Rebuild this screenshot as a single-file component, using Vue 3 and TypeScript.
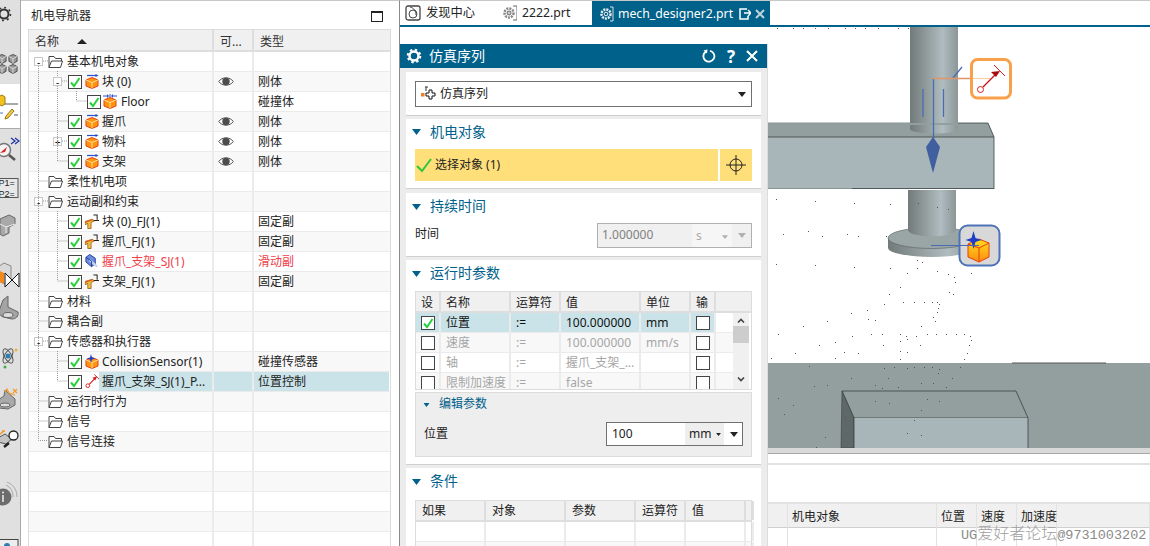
<script setup lang="ts">
interface TreeRow {
  depth?: number
  label?: string
  expander?: '+' | '-'
  icon?: string
  seen?: boolean
  type?: string
  red?: boolean
  selected?: boolean
}

const filled: TreeRow[] = [
  { depth: 0, label: '基本机电对象', expander: '-', icon: 'folder' },
  { depth: 1, label: '块 (0)', expander: '-', icon: 'body', seen: true, type: '刚体' },
  { depth: 2, label: 'Floor', icon: 'collide', type: '碰撞体' },
  { depth: 1, label: '握爪', icon: 'body', seen: true, type: '刚体' },
  { depth: 1, label: '物料', expander: '+', icon: 'body', seen: true, type: '刚体' },
  { depth: 1, label: '支架', icon: 'body', seen: true, type: '刚体' },
  { depth: 0, label: '柔性机电项', icon: 'folder' },
  { depth: 0, label: '运动副和约束', expander: '-', icon: 'folder' },
  { depth: 1, label: '块 (0)_FJ(1)', icon: 'fixed', type: '固定副' },
  { depth: 1, label: '握爪_FJ(1)', icon: 'fixed', type: '固定副' },
  { depth: 1, label: '握爪_支架_SJ(1)', icon: 'slider', type: '滑动副', red: true },
  { depth: 1, label: '支架_FJ(1)', icon: 'fixed', type: '固定副' },
  { depth: 0, label: '材料', icon: 'folder' },
  { depth: 0, label: '耦合副', icon: 'folder' },
  { depth: 0, label: '传感器和执行器', expander: '-', icon: 'folder' },
  { depth: 1, label: 'CollisionSensor(1)', icon: 'sensor', type: '碰撞传感器' },
  { depth: 1, label: '握爪_支架_SJ(1)_P...', icon: 'position', type: '位置控制', selected: true },
  { depth: 0, label: '运行时行为', icon: 'folder' },
  { depth: 0, label: '信号', icon: 'folder' },
  { depth: 0, label: '信号连接', icon: 'folder' },
]
const rows: TreeRow[] = [...filled, {}, {}, {}, {}, {}]

const params = [
  { name: '位置', op: ':=', val: '100.000000', unit: 'mm', on: true },
  { name: '速度', op: ':=', val: '100.000000', unit: 'mm/s', on: false },
  { name: '轴', op: ':=', val: '握爪_支架_...', unit: '', on: false },
  { name: '限制加速度', op: ':=', val: 'false', unit: '', on: false },
]

const upper: [number, number][] = [[34,537],[151,544],[268,550],[376,553],[55,643],[130,633],[172,649],[247,643],[280,649],[363,649],[34,733],[151,736],[268,742],[376,745],[427,760],[457,745],[517,754],[549,763],[568,772],[571,785],[406,802],[619,760],[457,720],[472,727],[517,562],[549,568],[460,550],[37,25],[85,25],[115,25],[150,25],[190,25],[240,25],[270,25],[300,25],[340,25],[400,25],[430,25]]
const lower: [number, number][] = [[570,5],[406,22],[373,43],[553,37],[565,43],[358,73],[415,67],[448,67],[478,67],[500,67],[515,67],[523,73],[520,85],[517,97],[259,100],[307,91],[310,118],[331,121],[505,112],[511,124],[187,124],[115,139],[469,139],[40,163],[262,169],[319,163],[352,163],[406,163],[424,169],[427,178],[406,184],[454,169],[487,163],[514,163],[544,163],[574,163],[598,163],[616,169],[619,181],[613,196],[211,187],[163,196],[355,196],[466,196],[238,217],[280,220],[91,220],[406,214],[427,217],[607,220],[18,235],[211,235],[406,238],[598,238],[133,259],[388,262],[427,265],[448,262],[478,262],[500,262],[523,268],[358,265],[586,262],[520,280],[259,295],[370,295],[148,319],[187,316],[331,316],[352,325],[400,322],[544,322],[562,295],[505,310],[469,310],[40,355],[85,376],[58,403],[331,364],[373,370],[487,358],[523,364],[469,391],[448,421],[427,460],[469,466],[181,472],[241,415],[154,502]]
const dots = [
  ...upper.map(([x, y]) => ({ x: Math.round(765 + x / 3), y: Math.round(20 + y / 3) })),
  ...lower.map(([x, y]) => ({ x: Math.round(765 + x / 3), y: Math.round(280 + y / 3) })),
]
</script>

<template>
  <svg class="defs" aria-hidden="true">
    <defs>
      <linearGradient id="cyl" x1="0" x2="1" y1="0" y2="0">
        <stop offset="0" stop-color="#727a7a" />
        <stop offset="0.3" stop-color="#8d9797" />
        <stop offset="0.68" stop-color="#afbcc0" />
        <stop offset="1" stop-color="#8b9696" />
      </linearGradient>
      <linearGradient id="cube" x1="0" x2="0" y1="0" y2="1">
        <stop offset="0" stop-color="#ffe21a" />
        <stop offset="1" stop-color="#ff8a10" />
      </linearGradient>
      <symbol id="i-folder" viewBox="0 0 15 13">
        <path d="M1 12.500V1.500h5l1.500 2h6v2.500" fill="#fff" stroke="#444" />
        <path d="M1 12.500h11.500l2-6.500h-11z" fill="#fff" stroke="#444" />
      </symbol>
      <symbol id="i-check" viewBox="0 0 14 14">
        <rect x=".5" y=".5" width="13" height="13" fill="#fff" stroke="#444" />
        <path d="M3 7.500l3 3.500 5.500-8" fill="none" stroke="#26d23c" stroke-width="2" />
      </symbol>
      <symbol id="i-cube" viewBox="0 0 14 12">
        <path d="M7 .5l6 2.500v6l-6 2.500-6-2.500V3z" fill="#ff9412" stroke="#e8400c" />
        <path d="M1 3l6 2.500L13 3M7 5.500V11.500" fill="none" stroke="#ffe08a" />
      </symbol>
      <symbol id="i-body" viewBox="0 0 14 15">
        <path d="M2 1.500h10" stroke="#2b50c8" stroke-width="1.200" />
        <path d="M13.500 1.500l-3-1.500v3z" fill="#2b50c8" />
        <use href="#i-cube" x="0" y="3" width="14" height="12" />
      </symbol>
      <symbol id="i-collide" viewBox="0 0 14 15">
        <path d="M0 2h5M9 2h5M7 0v4" stroke="#2b50c8" stroke-width="1" />
        <path d="M6 2l-2-2v4zM8 2l2-2v4z" fill="#2b50c8" />
        <use href="#i-cube" x="0" y="3" width="14" height="12" />
      </symbol>
      <symbol id="i-fixed" viewBox="0 0 15 15">
        <path d="M0 7.500l8-2.500 2 2-3.500 1.500v6.500H3V9.500L0 11z" fill="#f6c23e" stroke="#8a5012" stroke-width=".8" />
        <path d="M0 7.500l8-2.500 1 1-9 3z" fill="#e25a1a" />
        <path d="M9 .5h4v5M9.500 6.500H15" fill="none" stroke="#222" stroke-width="1.100" />
      </symbol>
      <symbol id="i-slider" viewBox="0 0 15 15">
        <path d="M1 3l4-3 6 4v6l-4 3-6-5z" fill="#6b8de0" stroke="#223a96" />
        <path d="M5 6l8 7" stroke="#c8d4ee" stroke-width="2.500" />
        <path d="M1 3l6 4v6" fill="none" stroke="#223a96" />
      </symbol>
      <symbol id="i-sensor" viewBox="0 0 14 15">
        <use href="#i-cube" x="0" y="3" width="14" height="12" />
        <path d="M6 0l1 3.500 3.500 1L7 5.500 6 9 5 5.500 1.500 4.500 5 3.500z" fill="#2340c4" />
      </symbol>
      <symbol id="i-position" viewBox="0 0 15 15">
        <circle cx="3" cy="12" r="2" fill="#fff" stroke="#d61c1c" />
        <path d="M4.500 10.500l6-6" stroke="#d61c1c" stroke-width="1.200" />
        <path d="M13 2l-5 1.500 3 3z" fill="#d61c1c" />
        <path d="M10 0l5 5" stroke="#d61c1c" />
      </symbol>
      <symbol id="i-eye" viewBox="0 0 16 11">
        <path d="M.7 5.500C4 .6 12 .6 15.300 5.500 12 10.400 4 10.400 .7 5.500z" fill="#fff" stroke="#555" />
        <circle cx="8" cy="5.500" r="3.700" fill="#4c4c4c" />
      </symbol>
      <symbol id="i-tri" viewBox="0 0 9 6">
        <path d="M0 0h9L4.500 6z" fill="#00618a" />
      </symbol>
      <symbol id="i-down" viewBox="0 0 8 5">
        <path d="M0 0h8L4 5z" />
      </symbol>
      <symbol id="i-cubelet" viewBox="0 0 11 11">
        <path d="M5.500 .5l4.500 2.200v5.300l-4.500 2.500L1 8V2.700z" fill="#9a9a9a" stroke="#444" />
        <path d="M1 2.700l4.500 2.400L10 2.700M5.500 5v5.500" fill="none" stroke="#ddd" />
      </symbol>
    </defs>
  </svg>

  <div class="app">
    <aside class="rail">
      <div class="rail-grey rail-a">
        <svg viewBox="0 0 20 84" width="20" height="84">
          <circle cx="4" cy="14" r="4.500" fill="none" stroke="#333" stroke-width="2" />
          <circle cx="4" cy="14" r="6.500" fill="none" stroke="#333" stroke-width="1.500" stroke-dasharray="2 3" />
          <use href="#i-cubelet" x="-3" y="54" width="10" height="10" />
          <use href="#i-cubelet" x="8" y="54" width="10" height="10" />
          <use href="#i-cubelet" x="-3" y="64" width="10" height="10" />
          <use href="#i-cubelet" x="8" y="64" width="10" height="10" />
        </svg>
      </div>
      <div class="rail-white">
        <svg viewBox="0 84 20 44" width="20" height="44">
          <path d="M-2 97l4-2 3 2v7l-3 2-4-2z" fill="#f1c21f" stroke="#9a7a10" />
          <path d="M5 104h13" stroke="#555" />
          <path d="M0 113h3" stroke="#5577cc" />
          <path d="M6 116l6-7 2 2-6 7-3 1z" fill="#f1c850" stroke="#9a7a10" />
          <path d="M14 115h4" stroke="#555" />
        </svg>
      </div>
      <div class="rail-grey rail-b">
        <svg viewBox="0 128 20 418" width="20" height="418">
          <path d="M11 138l4 3-4 3M15 138l4 3-4 3" fill="none" stroke="#1f35a8" stroke-width="1.300" />
          <circle cx="4" cy="150" r="6.500" fill="#f4f4f4" stroke="#777" stroke-width="1.500" />
          <path d="M0 153l7-6-2 5z" fill="#d32020" />
          <path d="M9 155l6 5" stroke="#555" stroke-width="2.500" />
          <rect x="-2" y="178.500" width="20" height="19" fill="#e8e8e8" stroke="#555" />
          <text x="-1.500" y="186" class="rail-text">P1=</text>
          <text x="-1.500" y="196.500" class="rail-text">P2=</text>
          <path d="M0 219l9-4 6 3v6l-6 3v6l-6 3-3-2z" fill="#a9a9a9" stroke="#666" />
          <path d="M0 224l6 3 9-3M6 227v6" fill="none" stroke="#eee" />
          <path d="M-2 267l6-4 7 3v14l-6 4-7-3z" fill="#d9d9d9" stroke="#888" />
          <path d="M-2 270l6 3v11l-6-3z" fill="#f58a1a" />
          <path d="M5 273l14 14V273L5 287z" fill="#fff" stroke="#111" />
          <path d="M3 300l5-4v11l10 5c1 4-2 7-6 7l-9-2c-3-1-4-4-4-6z" fill="#a4a4a4" stroke="#666" />
          <ellipse cx="8" cy="315" rx="5" ry="2.500" fill="#ddd" stroke="#666" />
          <ellipse cx="8" cy="356" rx="8" ry="3.500" fill="none" stroke="#555" transform="rotate(60 8 356)" />
          <ellipse cx="8" cy="356" rx="8" ry="3.500" fill="none" stroke="#555" transform="rotate(-60 8 356)" />
          <circle cx="8" cy="356" r="2.500" fill="#2a7fb0" />
          <circle cx="16" cy="350" r="1.500" fill="#f0b030" />
          <circle cx="5" cy="367" r="1.500" fill="#33b04a" />
          <path d="M-2 400l6-4 1-6 10 9v6l-7 4-9-1z" fill="#a9a9a9" stroke="#666" />
          <ellipse cx="5" cy="405" rx="5" ry="2" fill="#ddd" stroke="#666" />
          <path d="M5 392l2-3 2 4 6 2M13 389l4 4M17 389l-4 4" fill="none" stroke="#f59a2a" stroke-width="1.200" />
          <path d="M-2 438l7-4 7 5-6 5-8-2z" fill="#c4c4c4" stroke="#555" />
          <path d="M-1 435l5-4M2 431l3 0" stroke="#f59a2a" stroke-width="1.300" />
          <circle cx="13.500" cy="435.500" r="4.500" fill="#fff" stroke="#222" stroke-width="1.300" />
          <path d="M4 447l5-4" stroke="#222" stroke-width="2.500" />
          <circle cx="3" cy="497" r="8.500" fill="#6c6c6c" />
          <circle cx="3" cy="492.500" r="1" fill="#eee" />
          <path d="M3 495v7" stroke="#eee" stroke-width="1.500" />
          <path d="M6 485a12 12 0 0 1 7 12M7 482a15 15 0 0 1 10 15" fill="none" stroke="#aaa" />
          <rect x="-2" y="539.500" width="20" height="10" fill="#eee" stroke="#444" />
          <circle cx="7" cy="546" r="3" fill="#2a7fb0" />
        </svg>
      </div>
    </aside>

    <section class="nav">
      <header class="nav-head">
        <span>机电导航器</span>
        <i class="max-icon"></i>
      </header>
      <div class="tree">
        <div class="tree-head">
          <div class="th th-name">名称<i class="sort"></i></div>
          <div class="th">可...</div>
          <div class="th">类型</div>
        </div>
        <div
          v-for="(r, i) in rows"
          :key="i"
          class="tree-row"
          :class="{ odd: i % 2 === 1, sel: r.selected, red: r.red }"
        >
          <div class="cell name" :class="'d' + r.depth">
            <template v-if="r.label">
              <span v-if="r.depth !== 2" class="slot">
                <span v-if="r.expander" class="exp">{{ r.expander }}</span>
              </span>
              <svg v-if="r.depth !== 0" class="chk"><use href="#i-check" /></svg>
              <svg :class="r.depth === 0 ? 'folder' : 'ico'"><use :href="'#i-' + r.icon" /></svg>
              <span class="lbl">{{ r.label }}</span>
            </template>
          </div>
          <div class="cell mid">
            <svg v-if="r.seen" class="eye"><use href="#i-eye" /></svg>
          </div>
          <div class="cell kind">{{ r.type }}</div>
        </div>
        <svg class="guides" viewBox="29 52 200 400" width="200" height="400">
          <g fill="none" stroke="#999" stroke-dasharray="1 1">
            <path d="M38.500 67V441.500H48M57.500 72V77M57.500 87V162H68M76.500 92V102H87" />
            <path d="M43 62H48M38.500 182H48M43 202H48M38.500 302H48M38.500 322H48M43 342H48M38.500 402H48M38.500 422H48" />
            <path d="M62 82H68M57.500 122H68M62 142H68" />
            <path d="M57.500 212V282H68M57.500 222H68M57.500 242H68M57.500 262H68" />
            <path d="M57.500 352V382H68M57.500 362H68" />
          </g>
        </svg>
      </div>
    </section>

    <main class="main">
      <nav class="tabs">
        <div class="tab tab-1">
          <svg width="16" height="16" viewBox="0 0 16 16"><rect x="1" y="1" width="14" height="14" rx="2" fill="none" stroke="#444" stroke-width="1.300" /><circle cx="8" cy="9" r="4" fill="none" stroke="#444" /><path d="M5 2c4 1 6 4 6 8" fill="none" stroke="#444" /></svg>
          <span>发现中心</span>
        </div>
        <div class="tab tab-2">
          <svg width="14" height="16" viewBox="0 0 14 16"><path d="M10 1h4v14h-4" fill="none" stroke="#666" /><circle cx="6" cy="8" r="4.500" fill="none" stroke="#888" stroke-width="2.500" stroke-dasharray="2 1" /><circle cx="6" cy="8" r="2" fill="#ccc" stroke="#666" /></svg>
          <span>2222.prt</span>
        </div>
        <div class="tab tab-on">
          <svg width="14" height="16" viewBox="0 0 14 16"><path d="M10 1h3v14h-3" fill="none" stroke="#ddd" /><circle cx="6" cy="8" r="4.500" fill="none" stroke="#eee" stroke-width="2.500" stroke-dasharray="2 1" /><circle cx="6" cy="8" r="1.800" fill="#00618a" stroke="#eee" /></svg>
          <span class="tab-name">mech_designer2.prt</span>
          <svg width="12" height="12" viewBox="0 0 12 12"><path d="M8 1H1v10h8V8" fill="none" stroke="#fff" stroke-width="1.500" /><path d="M5 5h7M9 2l3 3-3 3" fill="none" stroke="#fff" stroke-width="1.300" /></svg>
          <svg width="10" height="10" viewBox="0 0 10 10"><path d="M1 1l8 8M9 1l-8 8" stroke="#bcd3de" stroke-width="2" /></svg>
        </div>
      </nav>

      <div class="view">
        <svg class="scene" viewBox="400 27 750 421" width="750" height="421">
          <rect x="910" y="27" width="48" height="102" fill="url(#cyl)" />
          <path d="M767 123H988L994 137V189H767z" fill="#a8b5b9" />
          <path d="M767 123H988L994 137H767z" fill="#939e9e" />
          <path d="M910 125v4a24 4.500 0 0 0 48 0v-4z" fill="url(#cyl)" />
          <path d="M767 137H994M994 137V189M852 188.500H994M958 123H988L994 137" fill="none" stroke="#3c4444" stroke-width=".8" />
          <path d="M767 188.500H852M767 123H910" stroke="#8d9494" stroke-width="1" />
          <path d="M888 238v10a44 9 0 0 0 88 0v-10z" fill="url(#cyl)" />
          <ellipse cx="932" cy="238" rx="44" ry="10.500" fill="#9aa5a5" stroke="#59605f" stroke-width=".6" />
          <path d="M908 190V230a24 6.500 0 0 0 48 0V190z" fill="url(#cyl)" />
          <path d="M767 363H1150V448H767z" fill="#939e9e" />
          <path d="M1012 363H1106" stroke="#555" />
          <path d="M842 391H1016L1028 418H854z" fill="#939e9e" stroke="#38413f" stroke-width=".8" />
          <path d="M842 391L854 418V448H841z" fill="#5f6868" stroke="#38413f" stroke-width=".6" />
          <path d="M854 418H1028V448H854z" fill="#a8b5b9" />
          <path d="M854 418V448M1028 418V448" stroke="#38413f" stroke-width=".8" />
          <rect v-for="(d, i) in dots" :key="i" :x="d.x" :y="d.y" width="1" height="1" fill="#555" />
          <g stroke="#4a6cb4" stroke-width="1.300" fill="none">
            <path d="M933.500 78.500V140M953 78l9-11M923 89V117M943.500 89V117" />
          </g>
          <path d="M933 137l7 10-7 26-7-26z" fill="#3f5f9f" />
          <path d="M933 78.500H973" stroke="#e0956a" stroke-width="1.300" />
          <path d="M973 78.500H990" stroke="#f9cfae" stroke-width="1.300" />
          <rect x="971.500" y="59.500" width="39" height="38.500" rx="6" fill="none" stroke="#f9a04a" stroke-width="3" />
          <circle cx="980.500" cy="89.500" r="3" fill="#fff" stroke="#d81c1c" />
          <path d="M983 87l12-12" stroke="#c41010" stroke-width="1.300" />
          <path d="M1000 71l-9 1 5 5z" fill="#a80d0d" />
          <path d="M994 65l11 11" stroke="#d81c1c" />
          <rect x="959.500" y="225.500" width="40" height="40" rx="8" fill="#d8d8d8" stroke="#4e72b8" stroke-width="2" />
          <path d="M968 244l11-5 10 4v14l-10 5-11-5z" fill="url(#cube)" stroke="#e63e10" />
          <path d="M968 244l11 4 10-5M979 248v14" fill="none" stroke="#e63e10" />
          <path d="M973.500 231l2 7 6 2-6 2-2 7-2-7-6-2 6-2z" fill="#1f3fc4" />
          <path d="M931 245.500H979" stroke="#4a6cb4" />
        </svg>
      </div>

      <div class="bottom">
        <div class="strip"></div>
        <div class="gap-a"></div>
        <div class="gap-b"></div>
        <div class="log log-head">
          <div></div><div>机电对象</div><div>位置</div><div>速度</div><div>加速度</div><div></div>
        </div>
        <div class="log log-row">
          <div></div><div></div><div></div><div></div><div></div><div></div>
        </div>
      </div>

      <div class="watermark"><span class="wm-a">UG</span>爱好者论坛<span class="wm-a">@9731003202</span></div>

      <div class="dialog">
        <header class="dlg-title">
          <svg width="16" height="16" viewBox="0 0 16 16"><circle cx="8" cy="8" r="4.500" fill="none" stroke="#fff" stroke-width="2.500" /><circle cx="8" cy="8" r="6.300" fill="none" stroke="#fff" stroke-width="2" stroke-dasharray="2.400 2.550" /></svg>
          <span class="dlg-name">仿真序列</span>
          <svg width="14" height="14" viewBox="0 0 14 14"><path d="M4 2.500a5.500 5.500 0 1 0 4-.7" fill="none" stroke="#fff" stroke-width="1.800" /><path d="M1.500 1.500l4-1-.5 4z" fill="#fff" /></svg>
          <b class="help">?</b>
          <svg width="14" height="14" viewBox="0 0 14 14"><path d="M2 2l10 10M12 2L2 12" stroke="#fff" stroke-width="2" /></svg>
        </header>

        <section class="sec sec-top">
          <div class="combo">
            <svg width="17" height="16" viewBox="0 0 17 16"><rect x="0" y="7" width="3.500" height="3.500" fill="#f08020" /><path d="M4 1H7M5 1V5" stroke="#333" /><path d="M8 4h3v3h3v3h-3v3H8v-3H5V7h3z" fill="#fff" stroke="#111" /></svg>
            <span>仿真序列</span>
            <svg class="arrow" width="8" height="5"><use href="#i-down" /></svg>
          </div>
        </section>

        <section class="sec sec-obj">
          <h3 class="sec-title"><svg width="9" height="6"><use href="#i-tri" /></svg>机电对象</h3>
          <div class="pick">
            <div class="pick-main">
              <svg width="16" height="15" viewBox="0 0 16 15"><path d="M1 8l5 5L15 1" fill="none" stroke="#2fc63c" stroke-width="2" /></svg>
              <span>选择对象 (1)</span>
            </div>
            <div class="pick-btn">
              <svg width="20" height="20" viewBox="0 0 20 20"><circle cx="10" cy="10" r="6" fill="none" stroke="#222" /><path d="M0 10H20M10 0V20" stroke="#222" /></svg>
            </div>
          </div>
        </section>

        <section class="sec sec-time">
          <h3 class="sec-title"><svg width="9" height="6"><use href="#i-tri" /></svg>持续时间</h3>
          <div class="field-row">
            <span>时间</span>
            <div class="time-box">
              <span class="t-val">1.000000</span>
              <span class="t-unit">s<svg width="6" height="4"><use href="#i-down" /></svg></span>
              <svg class="t-arrow" width="8" height="5"><use href="#i-down" /></svg>
            </div>
          </div>
        </section>

        <section class="sec sec-run">
          <h3 class="sec-title"><svg width="9" height="6"><use href="#i-tri" /></svg>运行时参数</h3>
          <div class="ptable">
            <div class="p-row p-head">
              <div>设</div><div>名称</div><div>运算符</div><div>值</div><div>单位</div><div>输</div><div></div>
            </div>
            <div v-for="(p, i) in params" :key="p.name" class="p-row" :class="{ active: p.on, dim: !p.on, alt: i % 2 === 1 }">
              <div class="p-c"><svg v-if="p.on" width="14" height="14"><use href="#i-check" /></svg><i v-else class="box"></i></div>
              <div>{{ p.name }}</div>
              <div>{{ p.op }}</div>
              <div>{{ p.val }}</div>
              <div>{{ p.unit }}</div>
              <div class="p-c"><i class="box"></i></div>
              <div></div>
            </div>
            <div class="scroll">
              <svg width="8" height="5" viewBox="0 0 8 5"><path d="M1 4.500L4 1.500 7 4.500" fill="none" stroke="#444" stroke-width="1.600" /></svg>
              <i class="thumb"></i>
              <svg class="sc-down" width="8" height="5" viewBox="0 0 8 5"><path d="M1 .5L4 3.500 7 .5" fill="none" stroke="#444" stroke-width="1.600" /></svg>
            </div>
          </div>
          <div class="edit">
            <h4 class="edit-title"><svg width="7" height="4" viewBox="0 0 9 6"><use href="#i-tri" /></svg>编辑参数</h4>
            <div class="edit-row">
              <span>位置</span>
              <div class="pos-box">
                <span class="pos-val">100</span>
                <span class="pos-unit">mm<svg width="5" height="3"><use href="#i-down" /></svg></span>
                <svg class="pos-arrow" width="8" height="5"><use href="#i-down" /></svg>
              </div>
            </div>
          </div>
        </section>

        <section class="sec sec-cond">
          <h3 class="sec-title"><svg width="9" height="6"><use href="#i-tri" /></svg>条件</h3>
          <div class="ctable">
            <div class="c-row c-head"><div>如果</div><div>对象</div><div>参数</div><div>运算符</div><div>值</div><div></div></div>
            <div class="c-row"><div></div><div></div><div></div><div></div><div></div><div></div></div>
            <div class="c-row alt"><div></div><div></div><div></div><div></div><div></div><div></div></div>
          </div>
        </section>
      </div>
    </main>
  </div>
</template>

<style>
html, body { margin: 0; background: #fff; overflow: hidden; }
</style>

<style scoped>
.defs { display: block; width: 0; height: 0; overflow: hidden; }
.app {
  display: flex;
  width: 1150px;
  height: 546px;
  overflow: hidden;
  background: #fff;
  font: 12px/1.2 "Noto Sans", "Noto Sans CJK SC", sans-serif;
  color: #222;
}
svg { display: block; flex: none; }

.rail { width: 21px; flex: none; display: flex; flex-direction: column; border-right: 1px solid #a8a8a8; box-sizing: border-box; }
.rail-grey { background: #e0e0e0; }
.rail-a { height: 84px; }
.rail-white { height: 44px; background: #fff; }
.rail-b { height: 418px; box-shadow: inset 0 1px 0 #aaa; }
.rail-text { font: 9px "Liberation Sans", sans-serif; fill: #222; }

.nav { width: 379px; flex: none; border-top: 1px solid #c8c8c8; border-right: 1px solid #8a8a8a; box-sizing: border-box; display: flex; flex-direction: column; }
.nav-head { height: 28px; flex: none; display: flex; align-items: center; justify-content: space-between; padding: 2px 16px 0 10px; box-sizing: border-box; }
.max-icon { width: 10px; height: 8px; border: 1px solid #222; border-top-width: 2px; display: block; }
.tree { position: relative; margin-left: 7px; width: 361px; border: solid #dcdcdc; border-width: 1px 1px 0; flex: 1; overflow: hidden; }
.tree-head { display: grid; grid-template-columns: 185px 40px 135px; height: 22px; box-sizing: border-box; background: #f0f0f0; border-bottom: 2px solid #dedede; }
.th { border-right: 2px solid #dedede; padding: 1px 0 0 6px; line-height: 21px; box-sizing: border-box; color: #333; }
.th:last-child { border-right: 0; }
.th-name { display: flex; align-items: center; gap: 18px; }
.sort { width: 0; height: 0; border: solid transparent; border-width: 0 5px 5px; border-bottom-color: #222; display: block; }

.tree-row { display: grid; grid-template-columns: 185px 40px 135px; height: 20px; box-sizing: border-box; border-bottom: 1px solid #ebebeb; background: #fff; }
.tree-row.odd { background: #f8f8f8; }
.cell { border-right: 2px solid #ebebeb; box-sizing: border-box; height: 19px; line-height: 19px; display: flex; align-items: center; }
.cell:last-child { border-right: 0; }
.name.d0 { padding-left: 5px; }
.name.d1 { padding-left: 24px; }
.name.d2 { padding-left: 58px; }
.slot { width: 10px; height: 10px; flex: none; }
.exp { display: block; width: 9px; height: 9px; line-height: 8px; text-align: center; border: 1px solid #c8c8c8; box-sizing: border-box; font-size: 10px; background: #fff; color: #111; }
.d0 .slot { margin-right: 4px; }
.d1 .slot { margin-right: 5px; }
.chk { width: 14px; height: 14px; }
.folder { width: 15px; height: 13px; }
.ico { width: 14px; height: 15px; margin-left: 3px; }
.d2 .ico { margin-left: 2px; }
.lbl { flex: 1; min-width: 0; white-space: nowrap; overflow: hidden; padding-left: 3px; height: 19px; }
.d0 .lbl { padding-left: 4px; }
.d2 .lbl { padding-left: 4px; }
.sel .lbl, .sel .mid, .sel .kind { background: #c9e3e9; }
.red .lbl, .red .kind { color: #f0404a; }
.mid { padding-left: 4px; }
.eye { width: 16px; height: 11px; }
.kind { padding-left: 4px; }
.guides { position: absolute; left: 0; top: 21px; pointer-events: none; }

.main { position: relative; flex: 1; min-width: 0; display: flex; flex-direction: column; }
.tabs { height: 27px; flex: none; display: flex; align-items: stretch; border-top: 1px solid #c8c8c8; border-bottom: 2px solid #00618a; box-sizing: border-box; background: #fff; }
.tab { display: flex; align-items: center; font-size: 12.250px; }
.tab-1 { width: 103px; padding-left: 5px; gap: 5px; box-sizing: border-box; }
.tab-2 { width: 89px; gap: 5px; }
.tab-on { width: 178px; padding-left: 8px; gap: 4px; box-sizing: border-box; background: #00618a; color: #fff; margin-bottom: -2px; }
.tab-name { width: 117px; white-space: nowrap; }
.view { flex: 1; min-height: 0; }
.scene { display: block; }
.bottom { height: 98px; flex: none; }
.strip { height: 5px; background: #d9d9d9; border-bottom: 1px solid #a8a8a8; }
.gap-a { height: 9px; border-bottom: 2px solid #e2e2e2; }
.gap-b { height: 37px; border-bottom: 2px solid #e2e2e2; }
.log { display: grid; grid-template-columns: 388px 149px 40px 40px 40px 1fr; }
.log > div { border-right: 1px solid #e2e2e2; padding-left: 4px; box-sizing: border-box; white-space: nowrap; }
.log-head { height: 23px; background: #f0f0f0; line-height: 25px; border-bottom: 1px solid #cfcfcf; box-sizing: content-box; }
.log-row { height: 21px; }
.watermark { position: absolute; left: 561px; top: 525px; white-space: nowrap; font: 16px/18px "Liberation Serif", "Noto Sans CJK SC", serif; font-weight: 300; color: #a0a0a0; }
.wm-a { font: 13.500px "Liberation Mono", monospace; color: #8a8a8a; }

.dialog { position: absolute; left: 0; top: 44px; bottom: 0; width: 368px; background: #ececec; border-right: 1px solid #dcdcdc; box-sizing: border-box; overflow: hidden; }
.dlg-title { height: 24px; background: #00618a; color: #fff; display: flex; align-items: center; padding-left: 6px; }
.dlg-name { flex: 1; font-size: 14px; margin-left: 7px; }
.help { font: bold 17px "Noto Sans", sans-serif; margin: 0 9px 0 10px; width: 10px; text-align: center; }
.dlg-title svg:last-child { margin-right: 8px; }
.sec { margin: 0 6px; background: #fff; box-shadow: 0 1px 0 #cfcfcf; }
.sec-top { margin-top: 4px; height: 43px; padding: 9px 9px 0; box-sizing: border-box; }
.combo { height: 26px; border: 1px solid #707070; box-sizing: border-box; display: flex; align-items: center; padding-left: 5px; gap: 2px; }
.combo .arrow { margin-left: auto; margin-right: 5px; fill: #222; }
.sec-title { margin: 0; height: 27px; padding: 0 0 0 6px; display: flex; align-items: center; gap: 9px; font-size: 14px; font-weight: 400; color: #00618a; }
.sec-obj { margin-top: 4px; height: 69px; box-sizing: border-box; }
.sec-obj .sec-title { height: 26px; margin-bottom: 4px; }
.pick { display: flex; gap: 2px; padding: 0 9px; height: 32px; }
.pick-main { flex: 1; background: #ffdf7a; display: flex; align-items: center; gap: 3px; padding-left: 1px; }
.pick-btn { width: 32px; background: #ffdf7a; display: flex; align-items: center; justify-content: center; }
.sec-time { margin-top: 5px; height: 63px; }
.field-row { display: flex; justify-content: space-between; padding: 3px 9px 0; align-items: center; height: 25px; }
.field-row > span { margin-top: -3px; }
.time-box { width: 155px; height: 25px; box-sizing: border-box; border: 1px solid #b0b0b0; background: #f0f0f0; display: flex; align-items: center; color: #808080; padding-left: 4px; fill: #b0b0b0; }
.t-val { width: 90px; }
.t-unit { width: 40px; height: 23px; display: flex; align-items: center; justify-content: space-between; background: #f6f6f6; color: #aaa; padding: 2px 4px 0; box-sizing: border-box; }
.t-arrow { margin-left: 6px; }
.sec-run { margin-top: 4px; height: 204px; }
.sec-run .sec-title { height: 27px; }
.ptable { position: relative; margin: 4px 9px 0; height: 99px; border: 1px solid #dcdcdc; box-sizing: border-box; overflow: hidden; background: #fff; }
.p-row { display: grid; grid-template-columns: 25px 70px 50px 80px 50px 25px 17px; height: 20px; box-sizing: border-box; border-bottom: 1px solid #ebebeb; width: 317px; }
.p-row > div { border-right: 2px solid #ebebeb; padding-left: 5px; line-height: 20px; box-sizing: border-box; overflow: hidden; white-space: nowrap; }
.p-row > div:last-child { border-right: 0; }
.p-head { height: 21px; background: #f0f0f0; width: 335px; border-bottom: 2px solid #dedede; grid-template-columns: 25px 70px 50px 80px 50px 25px 35px; }
.p-head > div { border-right-color: #dedede; line-height: 21px; }
.active { background: #c9e3e9; color: #111; }
.active > div:last-child { background: #fff; }
.dim { color: #a6a6a6; }
.alt { background: #f8f8f8; }
.p-row > .p-c { padding: 0; display: flex; align-items: center; justify-content: center; }
.box { display: block; width: 14px; height: 14px; box-sizing: border-box; border: 1px solid #444; background: #fff; }
.scroll { position: absolute; right: 2px; top: 21px; bottom: 0; width: 16px; background: #f0f0f0; display: flex; flex-direction: column; align-items: center; padding-top: 5px; box-sizing: border-box; }
.thumb { display: block; width: 16px; height: 17px; background: #cdcdcd; margin-top: 3px; }
.sc-down { margin-top: auto; margin-bottom: 7px; }
.edit { margin: 2px 9px 0; height: 65px; background: #eee; border: 1px solid #dcdcdc; box-sizing: border-box; }
.edit-title { margin: 0; height: 23px; display: flex; align-items: center; gap: 9px; padding-left: 7px; font-size: 12px; font-weight: 400; color: #00618a; }
.edit-row { display: flex; align-items: center; justify-content: space-between; padding: 6px 8px 0; }
.pos-box { width: 137px; height: 24px; box-sizing: border-box; border: 1px solid #707070; background: #fff; display: flex; align-items: center; padding-left: 5px; fill: #222; }
.pos-val { width: 73px; }
.pos-unit { width: 39px; height: 22px; background: #eee; display: flex; align-items: center; gap: 5px; padding-left: 4px; box-sizing: border-box; }
.pos-arrow { margin-left: 6px; }
.sec-cond { margin-top: 4px; height: 90px; }
.ctable { margin: 5px 9px 0; border: solid #dcdcdc; border-width: 1px 1px 0; }
.c-row { display: grid; grid-template-columns: 70px 80px 70px 50px 60px 1fr; height: 20px; box-sizing: border-box; border-bottom: 1px solid #ebebeb; }
.c-row > div { border-right: 2px solid #ebebeb; box-sizing: border-box; padding-left: 6px; line-height: 19px; }
.c-head { height: 21px; background: #f0f0f0; border-bottom: 2px solid #dedede; }
.c-head > div { border-right-color: #dedede; }
</style>
